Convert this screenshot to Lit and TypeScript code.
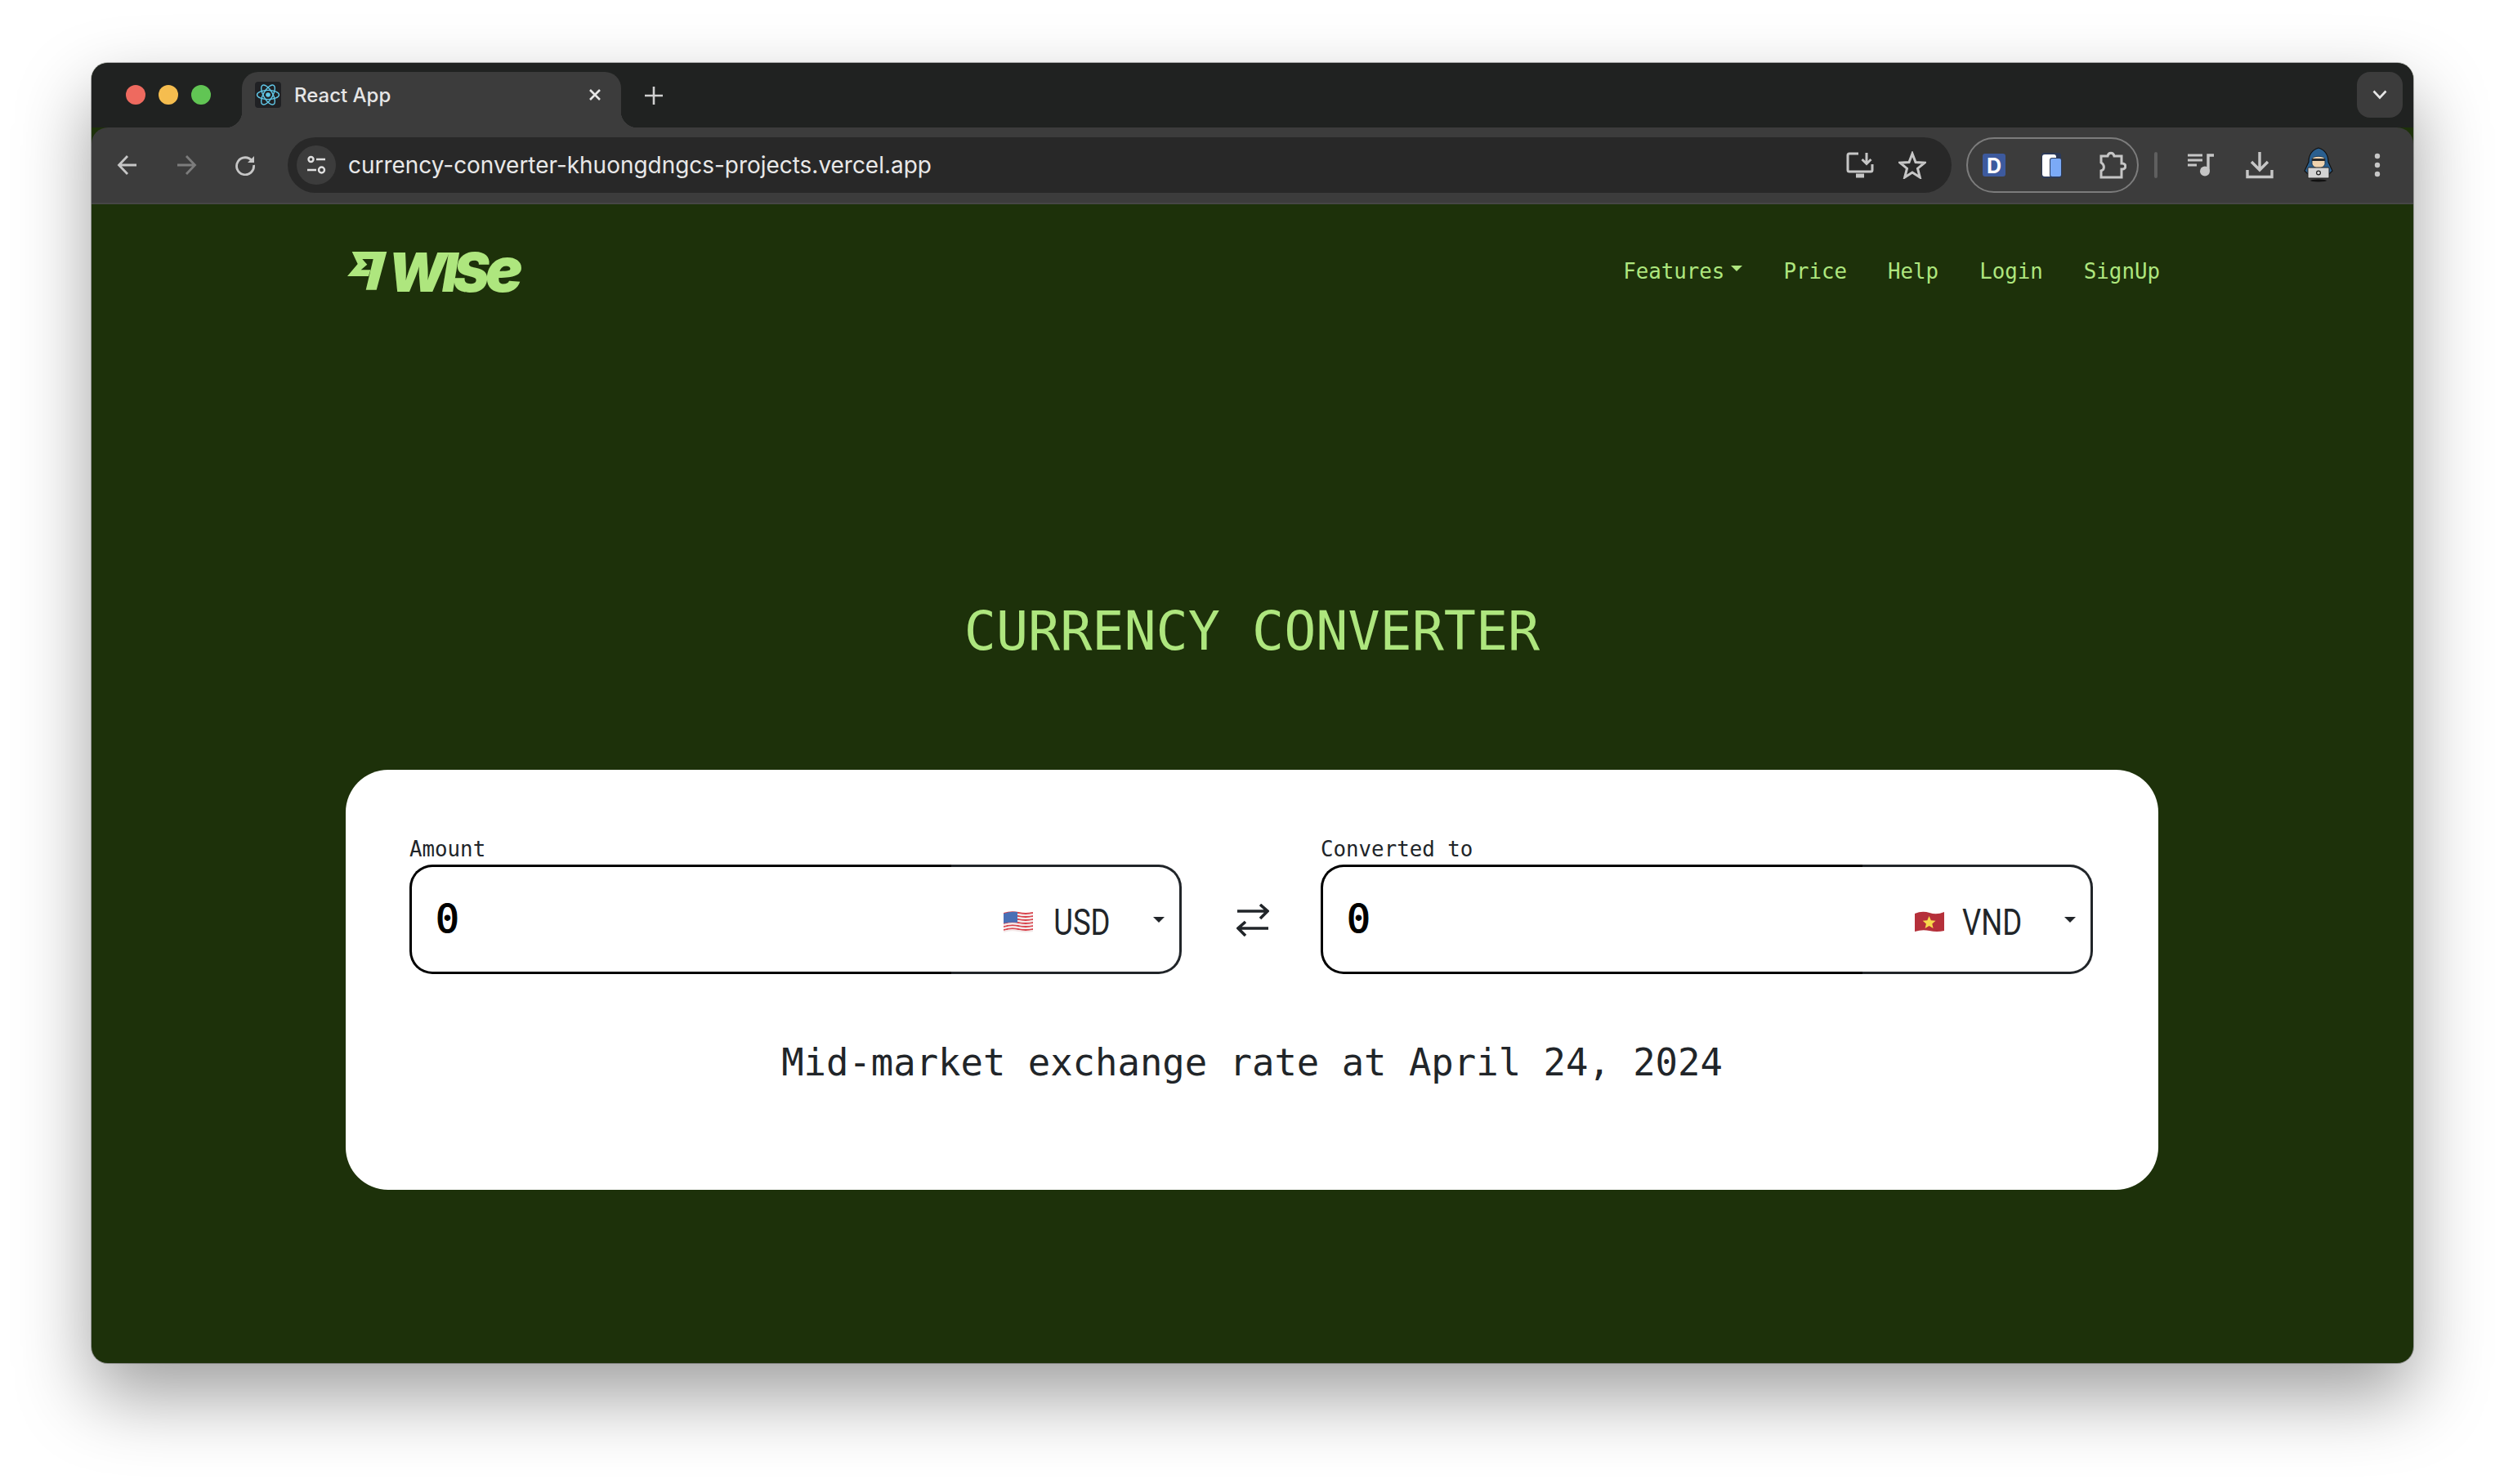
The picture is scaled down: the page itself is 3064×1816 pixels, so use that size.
import { LitElement, html, css, svg } from "lit";
import { customElement } from "lit/decorators.js";

const reactIcon = html`<svg class="fav" viewBox="0 0 32 32" width="32" height="32"><rect width="32" height="32" rx="4" fill="#202124"/><g fill="none" stroke="#61c8e8" stroke-width="1.4"><ellipse cx="16" cy="16" rx="13.5" ry="5.6"/><ellipse cx="16" cy="16" rx="13.5" ry="5.6" transform="rotate(60 16 16)"/><ellipse cx="16" cy="16" rx="13.5" ry="5.6" transform="rotate(120 16 16)"/></g><circle cx="16" cy="16" r="2.8" fill="#61c8e8"/></svg>`;

const usFlag = html`<svg class="flag" viewBox="0 0 36 26" width="36" height="26"><g fill="none" stroke="#d8434c" stroke-width="2">${[2, 6, 10, 14, 18, 22].map(
  (y) => svg`<path d="M0 ${y + 1}Q9 ${y - 2} 18 ${y}T36 ${y}"/>`
)}</g><g fill="none" stroke="#f3e9e9" stroke-width="2">${[4, 8, 12, 16, 20, 24].map(
  (y) => svg`<path d="M0 ${y + 1}Q9 ${y - 2} 18 ${y}T36 ${y}"/>`
)}</g><path d="M0 3Q9 0 17 1V14Q8 13 0 15Z" fill="#4a6fb5"/></svg>`;

const vnFlag = html`<svg class="flag vn" viewBox="0 0 36 26" width="36" height="26"><path d="M0 3Q9 -1 18 2T36 1V24Q27 26 18 24T0 25Z" fill="#b5303a"/><path d="M17.500 6l2.400 5.200 5.600.5-4.200 3.700 1.300 5.500-5-2.900-5 2.900 1.300-5.500-4.200-3.700 5.600-.5z" fill="#f7d94c"/></svg>`;

const caret = html`<svg class="caret" viewBox="0 0 14 7" width="14" height="7"><path d="M0 0H14L7 7Z" fill="currentColor"/></svg>`;

@customElement("app-root")
export class AppRoot extends LitElement {
  static styles = css`
    :host { display: block; width: 3064px; height: 1816px; background: #fff; overflow: hidden; }
    .desk { padding: 77px 111px 0 112px; }
    .window {
      width: 2841px; height: 1591px; border-radius: 20px; overflow: hidden; background: #1d310a;
      box-shadow: 0 40px 90px rgba(0,0,0,.38), 0 0 0 1px rgba(0,0,0,.28);
      display: flex; flex-direction: column; font-family: "DejaVu Sans Mono", monospace;
    }
    .tabbar { height: 79px; background: #202221; display: flex; align-items: flex-start; padding-top: 11px; box-sizing: border-box; flex: none; }
    .lights { width: 184px; height: 56px; display: flex; align-items: center; gap: 16px; padding-left: 42px; box-sizing: border-box; flex: none; }
    .lights i { width: 24px; height: 24px; border-radius: 50%; display: block; }
    .tab {
      width: 464px; height: 68px; background: #3c3c3c; border-radius: 20px 20px 0 0; display: flex; align-items: center; flex: none;
      padding: 0 24px 12px 16px; box-sizing: border-box; color: #e6e6e6; font: 500 24px Inter, sans-serif; position: relative;
    }
    .tab::before, .tab::after { content: ""; position: absolute; bottom: 0; width: 20px; height: 20px; }
    .tab::before { left: -20px; background: radial-gradient(circle at 0 0, transparent 20px, #3c3c3c 20.5px); }
    .tab::after { right: -20px; background: radial-gradient(circle at 100% 0, transparent 20px, #3c3c3c 20.5px); }
    .tab span { margin-left: 16px; flex: 1; }
    .plus { margin: 18px 0 0 29px; flex: 1; }
    .plus svg { display: block; }
    .expand { width: 56px; height: 56px; background: #3c3c3c; border-radius: 16px; margin-right: 13px; display: flex; align-items: center; justify-content: center; }
    .toolbar {
      height: 94px; background: #3c3c3c; border-radius: 20px 20px 0 0; display: flex; align-items: center; flex: none;
      border-bottom: 2px solid #464646; box-sizing: border-box;
    }
    .nav-btns { display: flex; padding-left: 8px; width: 240px; flex: none; box-sizing: border-box; }
    .nav-btn { width: 72px; display: flex; justify-content: center; flex: none; }
    .omni {
      width: 2036px; height: 68px; background: #282828; border-radius: 34px; display: flex; align-items: center; flex: none;
      padding: 0 31px 0 11px; box-sizing: border-box; color: #e8e8e8; font: 400 27.95px Inter, sans-serif;
    }
    .site { width: 48px; height: 48px; border-radius: 50%; background: #3c3c3c; display: flex; align-items: center; justify-content: center; flex: none; margin-right: 15px; }
    .url { flex: 1; }
    .omni-ic { display: flex; gap: 30px; align-items: center; }
    .ext { width: 211px; height: 68px; margin-left: 18px; border: 2px solid #7c7c7c; border-radius: 34px; box-sizing: border-box; display: flex; align-items: center; justify-content: space-between; padding: 0 13px 0 18px; flex: none; }
    .sep { width: 4px; height: 32px; background: #5f5f5f; border-radius: 2px; margin-left: 19px; flex: none; }
    .right-ic { display: flex; align-items: center; flex: none; margin-left: 17px; }
    .slot { width: 72px; display: flex; justify-content: center; align-items: center; flex: none; }
    .right-ic svg { display: block; }
    .content { flex: 1; min-height: 0; padding: 40px 0 0 311px; box-sizing: border-box; color: #aee67e; }
    .container { width: 2218px; }
    .nav { display: flex; align-items: center; justify-content: space-between; height: 83px; }
    .logo { display: flex; align-items: center; gap: 0; margin-left: 2px; color: #aee67e; }
    .logo svg { display: block; }
    .word { display: inline-flex; align-items: baseline; font: italic 900 66px/46px Inter, sans-serif; letter-spacing: -5.5px; margin: -2px 0 0 1px; }
    .word b { font: italic 900 76px/46px Inter, sans-serif; letter-spacing: 0; margin-left: 1px; }
    .links { display: flex; align-items: center; gap: 50px; font-size: 25.8px; margin-right: -2px; }
    .links a { display: flex; align-items: center; gap: 8px; }
    .links .caret { margin-bottom: 6px; display: block; }
    h1 { margin: 0; font: 400 65px/80px "DejaVu Sans Mono", monospace; color: #aee67e; text-align: center; padding-top: 360px; }
    .card { margin-top: 129px; background: #fff; border-radius: 52px; height: 514px; padding: 82px 80px 0 78px; box-sizing: border-box; color: #212529; }
    .row { display: flex; align-items: flex-end; justify-content: space-between; }
    .field { width: 945px; }
    label { display: block; font-size: 25.8px; line-height: 30px; height: 30px; margin-bottom: 4px; }
    .group { display: flex; height: 134px; }
    .in { flex: none; width: 663px; box-sizing: border-box; border: 3px solid #000; border-right: 0; border-radius: 28px 0 0 28px; display: flex; align-items: center; padding-left: 29px; padding-bottom: 2px; font-size: 48px; font-weight: 400; -webkit-text-stroke: 1.2px #000; color: #000; }
    .sel { flex: 1; box-sizing: border-box; border: 3px solid #212529; border-left: 0; border-radius: 0 28px 28px 0; display: flex; align-items: center; justify-content: flex-end; padding-top: 8px; font: 400 44px Roboto, sans-serif; color: #212529; position: relative; }
    .flag { margin: -2px 11px 0 0; display: block; }
    .flag.vn { margin-right: 7px; }
    .code { margin-right: 84px; display: block; transform: scaleX(.83); transform-origin: 100% 50%; }
    .sel .caret { display: block; position: absolute; right: 18px; top: 61px; }
    .swap { width: 86px; height: 134px; display: flex; align-items: center; justify-content: center; flex: none; }
    .swap svg { margin: 2px 0 0 3px; }
    .rate { text-align: center; font-size: 45.55px; line-height: 54px; margin-top: 82px; margin-left: 2px; }
  `;

  render() {
    return html`<div class="desk"><div class="window">
      <div class="tabbar">
        <div class="lights"><i style="background:#ee6a5f"></i><i style="background:#f5bd4f"></i><i style="background:#61c554"></i></div>
        <div class="tab">${reactIcon}<span>React App</span>
          <svg viewBox="0 0 16 16" width="16" height="16"><path d="M2 2L14 14M14 2L2 14" stroke="#e6e6e6" stroke-width="2.6"/></svg>
        </div>
        <div class="plus"><svg viewBox="0 0 22 22" width="22" height="22"><path d="M11 0V22M0 11H22" stroke="#d0d0d0" stroke-width="2.6"/></svg></div>
        <div class="expand"><svg viewBox="0 0 18 12" width="18" height="12"><path d="M1.500 1.500L9 9.500L16.500 1.500" fill="none" stroke="#e6e6e6" stroke-width="2.600"/></svg></div>
      </div>
      <div class="toolbar">
        <div class="nav-btns">
          <div class="nav-btn"><svg viewBox="0 0 26 26" width="26" height="26"><path d="M24 13H3M13 2L2.500 13L13 24" fill="none" stroke="#c6c6c6" stroke-width="2.800"/></svg></div>
          <div class="nav-btn"><svg viewBox="0 0 26 26" width="26" height="26"><path d="M2 13H23M13 2L23.500 13L13 24" fill="none" stroke="#7c7c7c" stroke-width="2.800"/></svg></div>
          <div class="nav-btn"><svg viewBox="0 0 26 26" width="26" height="26"><path d="M21.500 8A10.500 10.500 0 1 0 23.500 13" fill="none" stroke="#c6c6c6" stroke-width="2.800"/><path d="M24 2V10H16Z" fill="#c6c6c6"/></svg></div>
        </div>
        <div class="omni">
          <div class="site"><svg viewBox="0 0 24 24" width="24" height="24" fill="none" stroke="#e0e0e0" stroke-width="2.400"><circle cx="5.500" cy="5" r="3"/><path d="M12 5H23M1 18H12"/><circle cx="18.500" cy="18" r="3.500"/></svg></div>
          <div class="url">currency-converter-khuongdngcs-projects.vercel.app</div>
          <div class="omni-ic">
            <svg viewBox="0 0 34 34" width="34" height="34" fill="none" stroke="#c6c6c6" stroke-width="3"><path d="M15 3H4A2 2 0 0 0 2 5V23A2 2 0 0 0 4 25H30A2 2 0 0 0 32 23V16"/><path d="M12 30H22" stroke-width="5"/><path d="M25 2V15M19.500 10L25 15.500L30.500 10"/></svg>
            <svg viewBox="0 0 34 34" width="34" height="34" fill="none" stroke="#c6c6c6" stroke-width="3"><path d="M17 3L21 13.500L32 14.200L23.500 21.200L26.300 32L17 26L7.700 32L10.500 21.200L2 14.200L13 13.500Z"/></svg>
          </div>
        </div>
        <div class="ext">
          <svg viewBox="0 0 28 28" width="28" height="28"><rect width="28" height="28" rx="3" fill="#3d5a9e"/><text x="14" y="23.500" text-anchor="middle" font-family="Inter, sans-serif" font-weight="700" font-size="25" fill="#fff">D</text></svg>
          <svg viewBox="0 0 26 31" width="26" height="31"><rect x="0" y="0" width="24" height="31" rx="3" fill="#2c3a58"/><rect x="1" y="2" width="17" height="27" rx="3" fill="#fff"/><rect x="10" y="6" width="15" height="24" rx="3" fill="#2c3a58"/><rect x="11" y="7" width="13" height="22" rx="2" fill="#7baaf7"/></svg>
          <svg viewBox="0 0 34 34" width="34" height="34" fill="none" stroke="#c6c6c6" stroke-width="3"><path d="M3 6H11C12 1 18 1 19 6H28V15H29C34 15 34 22 29 22H28V32H3V24C7 23 8 17 3 14Z"/></svg>
        </div>
        <div class="sep"></div>
        <div class="right-ic">
          <div class="slot"><svg viewBox="0 0 34 30" width="34" height="30"><path d="M1 3H19M1 9H19M1 15H12" stroke="#c6c6c6" stroke-width="3"/><path d="M26 22V3H33" fill="none" stroke="#c6c6c6" stroke-width="3.400"/><circle cx="22" cy="22.500" r="6" fill="#c6c6c6"/></svg></div>
          <div class="slot"><svg viewBox="0 0 34 34" width="34" height="34" fill="none" stroke="#c6c6c6" stroke-width="3.400"><path d="M17 1V23M7 13L17 23L27 13"/><path d="M2 23V31.500H32V23"/></svg></div>
          <div class="slot"><svg viewBox="0 0 36 44" width="36" height="44"><path d="M18 1C10 3 6 10 6 18L1 29L6 34H30L35 29L30 18C30 10 26 3 18 1Z" fill="#2a5f8f" stroke="#111" stroke-width="1.200"/><path d="M10 15C10 10 26 10 26 15V21C25 24 21 26 18 26C15 26 11 24 10 21Z" fill="#f0d3ae" stroke="#173a5a" stroke-width="1"/><path d="M10 14H26V17H10Z" fill="#2b2b2b"/><rect x="5" y="25" width="26" height="13" rx="1" fill="#d4d4d4" stroke="#222" stroke-width="1"/><circle cx="18" cy="31.500" r="2.400" fill="none" stroke="#222" stroke-width="1.200"/><ellipse cx="18" cy="41" rx="10" ry="1.400" fill="#111"/></svg></div>
          <div class="slot"><svg viewBox="0 0 8 30" width="8" height="30" fill="#c6c6c6"><circle cx="4" cy="4" r="3.200"/><circle cx="4" cy="15" r="3.200"/><circle cx="4" cy="26" r="3.200"/></svg></div>
        </div>
      </div>
      <div class="content"><div class="container">
        <div class="nav">
          <div class="logo">
            <svg viewBox="0 0 49 48" width="49" height="48"><path d="M5.700 0H48.300L35.700 46.700H22.700L31.700 9H18.300L24.300 15.700L16.700 22.300H28.300L26 30H0L12.700 15Z" fill="currentColor"/></svg>
            <span class="word">WIS<b>e</b></span>
          </div>
          <div class="links">
            <a>Features ${caret}</a><a>Price</a><a>Help</a><a>Login</a><a>SignUp</a>
          </div>
        </div>
        <h1>CURRENCY CONVERTER</h1>
        <div class="card">
          <div class="row">
            <div class="field"><label>Amount</label>
              <div class="group"><div class="in">0</div><div class="sel">${usFlag}<span class="code">USD</span>${caret}</div></div>
            </div>
            <div class="swap"><svg viewBox="0 0 40 40" width="40" height="40" fill="none" stroke="#212529" stroke-width="3.600"><path d="M1 9H38M29 1L38 9L29 18"/><path d="M39 30H2M11 22L2 30L11 39"/></svg></div>
            <div class="field"><label>Converted to</label>
              <div class="group"><div class="in">0</div><div class="sel">${vnFlag}<span class="code">VND</span>${caret}</div></div>
            </div>
          </div>
          <div class="rate">Mid-market exchange rate at April 24, 2024</div>
        </div>
      </div></div>
    </div></div>`;
  }
}
